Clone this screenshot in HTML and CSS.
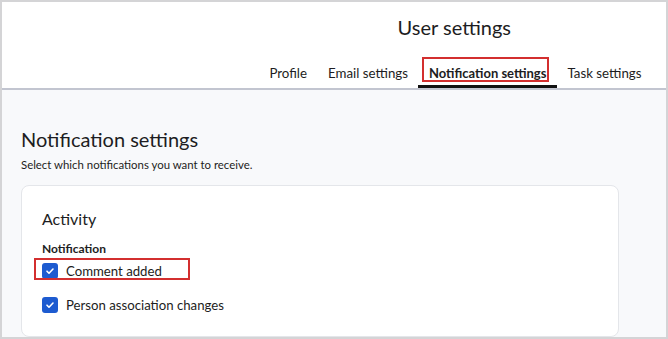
FILE: index.html
```html
<!DOCTYPE html>
<html lang="en">
<head>
    <meta charset="UTF-8">
    <meta name="viewport" content="width=device-width, initial-scale=1.0">
    <title>User settings</title>
    <link rel="stylesheet" href="styles.css">
</head>
<body>
    <div class="frame">
        <header class="header">
            <h1 class="page-title">User settings</h1>
            <nav class="tabs">
                <a class="tab">Profile</a>
                <a class="tab">Email settings</a>
                <a class="tab active"><span class="mark">Notification settings</span></a>
                <a class="tab">Task settings</a>
            </nav>
        </header>

        <main class="content">
            <h2 class="section-title">Notification settings</h2>
            <p class="section-sub">Select which notifications you want to receive.</p>

            <div class="card">
                <h3 class="card-title">Activity</h3>
                <div class="group-label">Notification</div>
                <label class="check-row mark-row">
                    <span class="box">
                        <svg width="10" height="10" viewBox="0 0 10 10"><path d="M2 5.2l2 2 4-4.2" fill="none" stroke="#fff" stroke-width="1.6" stroke-linecap="round" stroke-linejoin="round"/></svg>
                    </span>
                    Comment added
                </label>
                <label class="check-row">
                    <span class="box">
                        <svg width="10" height="10" viewBox="0 0 10 10"><path d="M2 5.2l2 2 4-4.2" fill="none" stroke="#fff" stroke-width="1.6" stroke-linecap="round" stroke-linejoin="round"/></svg>
                    </span>
                    Person association changes
                </label>
            </div>
        </main>
    </div>
</body>
</html>
```

FILE: styles.css
```css
* {
    margin: 0;
    padding: 0;
    box-sizing: border-box;
}

body {
    font-family: 'Lato', sans-serif;
    color: #1d1d22;
    background: #fff;
}

.frame {
    width: 668px;
    height: 339px;
    border: 2px solid #d4d4d6;
    overflow: hidden;
    display: flex;
    flex-direction: column;
}

.header {
    height: 88px;
    background: #fff;
    border-bottom: 2px solid #c2c5d0;
    display: flex;
    flex-direction: column;
    align-items: flex-end;
    padding-right: 14px;
}

.page-title {
    font-size: 20px;
    font-weight: 400;
    margin-top: 13px;
    margin-right: 141px;
    line-height: 24px;
}

.tabs {
    display: flex;
    margin-top: 25px;
}

.tab {
    font-size: 13.3px;
    padding: 0 10.5px;
    height: 24px;
    line-height: 18px;
    border-bottom: 3px solid transparent;
    color: #1d1d22;
}

.tab.active {
    font-weight: 700;
    font-size: 13px;
    border-bottom-color: #111;
}

/* red annotation boxes */
.mark {
    position: relative;
}

.mark::after {
    content: '';
    position: absolute;
    left: -7px;
    right: -3px;
    top: -8px;
    bottom: -1px;
    border: 2px solid #d32f2f;
}

.content {
    flex: 1;
    background: #f8f9fb;
    padding: 36px 0 0 19px;
}

.section-title {
    font-size: 20px;
    font-weight: 400;
    line-height: 26px;
}

.section-sub {
    font-size: 11.4px;
    margin-top: 6px;
    line-height: 14px;
}

.card {
    width: 598px;
    height: 152px;
    margin-top: 13px;
    background: #fff;
    border: 1px solid #e4e6ea;
    border-radius: 8px;
    padding: 23px 20px 0;
}

.card-title {
    font-size: 16px;
    font-weight: 400;
    line-height: 20px;
}

.group-label {
    font-size: 12px;
    font-weight: 700;
    margin-top: 13px;
    line-height: 14px;
}

.check-row {
    display: flex;
    align-items: center;
    gap: 8px;
    font-size: 13.2px;
    height: 22px;
    margin-top: 12px;
    width: fit-content;
}

.mark-row {
    margin-top: 4px;
    position: relative;
}

.mark-row::after {
    content: '';
    position: absolute;
    left: -8px;
    width: 152px;
    top: -2px;
    bottom: 2px;
    border: 2px solid #d32f2f;
}

.box {
    width: 16px;
    height: 16px;
    border-radius: 3px;
    background: #1d5bd0;
    display: flex;
    align-items: center;
    justify-content: center;
}
```
